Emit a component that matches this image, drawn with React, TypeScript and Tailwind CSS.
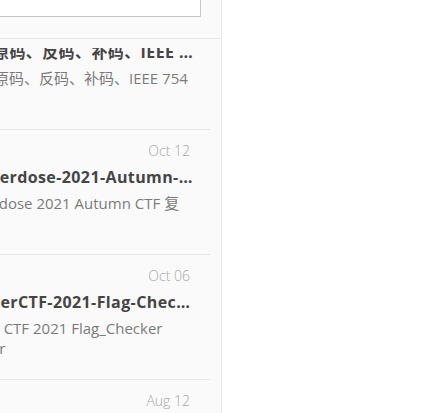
import React from "react";

type Item = {
  date: string;
  title: string;
  titleShift: string;
  excerpt: string;
  excerptShift: string;
};

const items: Item[] = [
  {
    date: "Oct 20",
    title: "原码、反码、补码、IEEE 754 浮点数",
    titleShift: "ml-[-7px]",
    excerpt: "原码、反码、补码、IEEE 754",
    excerptShift: "ml-[-6px]",
  },
  {
    date: "Oct 12",
    title: "Overdose-2021-Autumn-CTF-WriteUp",
    titleShift: "ml-[-23px]",
    excerpt: "Overdose 2021 Autumn CTF 复现",
    excerptShift: "ml-[-35px]",
  },
  {
    date: "Oct 06",
    title: "TigerCTF-2021-Flag-Checker-WriteUp",
    titleShift: "ml-[-24px]",
    excerpt: "Tiger CTF 2021 Flag_Checker Timer",
    excerptShift: "ml-[-35px]",
  },
  {
    date: "Aug 12",
    title: "Notes",
    titleShift: "ml-0",
    excerpt: "Notes",
    excerptShift: "ml-0",
  },
];

function PostItem({ item }: { item: Item }) {
  return (
    <div className="mr-[11px] border-b border-[#e6e6e6] pt-[11px] pb-[21px]">
      <div className="pr-[20px] text-right text-[14px] leading-[20px] font-light text-[#a8a8a8]">
        {item.date}
      </div>
      <div className="mt-1 mr-[11px] overflow-hidden">
        <div
          className={`${item.titleShift} truncate text-[16px] leading-[24px] font-bold tracking-[0.4px] text-[#454545]`}
        >
          {item.title}
        </div>
      </div>
      <div className="mt-1 mr-[18px] h-[40px] overflow-hidden">
        <div className={`${item.excerptShift} text-[15px] leading-[20px] text-[#7a7a7a]`}>
          {item.excerpt}
        </div>
      </div>
    </div>
  );
}

export default function App() {
  return (
    <div className="flex h-[413px] w-[431px] overflow-hidden bg-white font-['Open_Sans','Noto_Sans_CJK_SC',sans-serif]">
      <aside className="flex h-full w-[222px] shrink-0 flex-col overflow-hidden border-r border-[#e9e9e9] bg-[#fafafa]">
        <div className="h-[39px] shrink-0 border-b border-[#e6e6e6] pr-[20px]">
          <div className="ml-[-2px] mt-[-17px] h-[34px] border border-[#c6c6c6] bg-white" />
        </div>
        <div className="min-h-0 flex-1 overflow-hidden pt-[9px]">
          <div className="h-full overflow-hidden">
            <div className="mt-[-43px]">
              {items.map((it) => (
                <PostItem key={it.date} item={it} />
              ))}
            </div>
          </div>
        </div>
      </aside>
      <main className="flex-1 bg-white" />
    </div>
  );
}
